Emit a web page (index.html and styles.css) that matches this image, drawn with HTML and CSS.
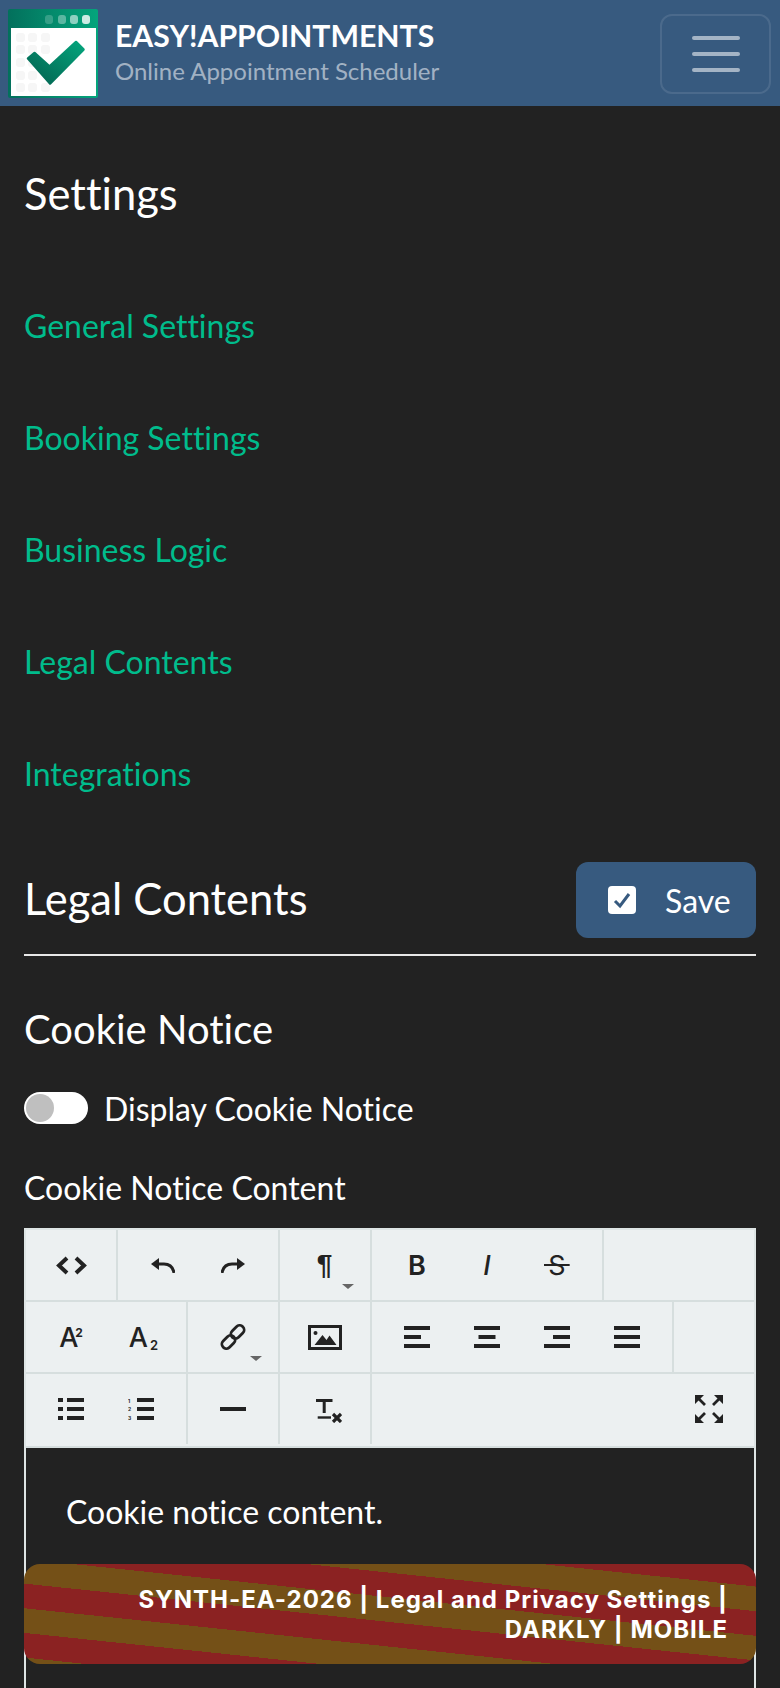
FILE: index.html
```html
<!DOCTYPE html>
<html lang="en">
<head>
    <meta charset="UTF-8">
    <meta name="viewport" content="width=device-width, initial-scale=1.0">
    <title>Easy!Appointments - Legal Contents</title>
    <link rel="stylesheet" href="styles.css">
</head>
<body>
    <header class="navbar">
        <svg class="logo" viewBox="0 0 90 89" width="90" height="89" aria-hidden="true">
            <defs>
                <linearGradient id="logoTop" x1="0" y1="0" x2="1" y2="0">
                    <stop offset="0" stop-color="#03705c"/>
                    <stop offset="1" stop-color="#04a57c"/>
                </linearGradient>
                <linearGradient id="logoCheck" x1="0" y1="1" x2="1" y2="0">
                    <stop offset="0" stop-color="#03604f"/>
                    <stop offset="1" stop-color="#04a57c"/>
                </linearGradient>
            </defs>
            <rect width="90" height="89" rx="2" fill="url(#logoTop)"/>
            <rect x="3" y="19" width="85" height="68" fill="#fff"/>
            <rect x="37" y="6" width="8" height="9" rx="3" fill="#fff" opacity=".2"/>
            <rect x="50" y="6" width="8" height="9" rx="3" fill="#fff" opacity=".35"/>
            <rect x="62" y="6" width="8" height="9" rx="3" fill="#fff" opacity=".55"/>
            <rect x="74" y="6" width="8" height="9" rx="3" fill="#fff" opacity=".8"/>
            <g fill="#f6f6f6">
                <rect x="8" y="24" width="9" height="9" rx="3"/><rect x="20" y="24" width="9" height="9" rx="3"/><rect x="33" y="24" width="9" height="9" rx="3"/>
                <rect x="8" y="36" width="9" height="9" rx="3"/><rect x="20" y="36" width="9" height="9" rx="3"/><rect x="33" y="36" width="9" height="9" rx="3"/>
                <rect x="8" y="49" width="9" height="9" rx="3"/><rect x="20" y="49" width="9" height="9" rx="3"/>
                <rect x="8" y="62" width="9" height="9" rx="3"/><rect x="20" y="62" width="9" height="9" rx="3"/>
                <rect x="8" y="74" width="9" height="9" rx="3"/><rect x="20" y="74" width="9" height="9" rx="3"/><rect x="33" y="74" width="9" height="9" rx="3"/>
            </g>
            <path d="M20 49.5 L26.5 44 L41.5 57.5 L68 33 L75.5 40.5 L42 74.5 Z" fill="url(#logoCheck)" stroke="url(#logoCheck)" stroke-width="2.5" stroke-linejoin="round"/>
        </svg>
        <div class="brand">
            <div class="brand-title">EASY!APPOINTMENTS</div>
            <div class="brand-sub">Online Appointment Scheduler</div>
        </div>
        <button class="toggler" aria-label="Menu">
            <span class="toggler-bar"></span>
            <span class="toggler-bar"></span>
            <span class="toggler-bar"></span>
        </button>
    </header>

    <main class="page">
        <h1 class="side-title">Settings</h1>
        <nav class="side-nav">
            <a href="#">General Settings</a>
            <a href="#">Booking Settings</a>
            <a href="#">Business Logic</a>
            <a href="#">Legal Contents</a>
            <a href="#">Integrations</a>
        </nav>

        <div class="section-head">
            <h2 class="section-title">Legal Contents</h2>
            <button class="save-btn">
                <svg viewBox="0 0 28 28" width="28" height="28" aria-hidden="true">
                    <rect width="28" height="28" rx="4" fill="#fff"/>
                    <path d="M7 15 L12 20 L21 8" fill="none" stroke="#375a7f" stroke-width="3"/>
                </svg>
                Save
            </button>
        </div>

        <h3 class="sub-title">Cookie Notice</h3>
        <div class="switch-row">
            <span class="switch"><span class="switch-knob"></span></span>
            <span>Display Cookie Notice</span>
        </div>
        <div class="field-label">Cookie Notice Content</div>

        <div class="editor">
            <div class="toolbar">
                <div class="tool-row">
                    <div class="tool-group">
                        <span class="tool">
                            <svg viewBox="0 0 31 19" width="31" height="19"><path d="M11 2 L3 9.5 L11 17 M20 2 L28 9.5 L20 17" fill="none" stroke="#222" stroke-width="4"/></svg>
                        </span>
                    </div>
                    <div class="tool-group">
                        <span class="tool">
                            <svg viewBox="0 0 24 15" width="24" height="15"><path d="M0 6 L8 0 V12 Z" fill="#222"/><path d="M7 6 H13 C18 6 22 9 23 15" fill="none" stroke="#222" stroke-width="3"/></svg>
                        </span>
                        <span class="tool">
                            <svg viewBox="0 0 24 15" width="24" height="15"><path d="M24 6 L16 0 V12 Z" fill="#222"/><path d="M17 6 H11 C6 6 2 9 1 15" fill="none" stroke="#222" stroke-width="3"/></svg>
                        </span>
                    </div>
                    <div class="tool-group">
                        <span class="tool tool-para">¶<i class="caret"></i></span>
                    </div>
                    <div class="tool-group">
                        <span class="tool tool-bold">B</span>
                        <span class="tool tool-italic">I</span>
                        <span class="tool tool-strike"><span class="strike">S</span></span>
                    </div>
                </div>
                <div class="tool-row">
                    <div class="tool-group">
                        <span class="tool tool-script">A<sup class="sup">2</sup></span>
                        <span class="tool tool-script tool-script-sub">A<sub class="sub">2</sub></span>
                    </div>
                    <div class="tool-group">
                        <span class="tool">
                            <svg viewBox="0 0 26 26" width="26" height="26">
                                <rect x="10" y="3.5" width="15" height="9" rx="4.5" transform="rotate(-45 17.5 8)" fill="none" stroke="#222" stroke-width="2.8"/>
                                <rect x="1" y="13.5" width="15" height="9" rx="4.5" transform="rotate(-45 8.5 18)" fill="none" stroke="#222" stroke-width="2.8"/>
                            </svg>
                            <i class="caret"></i>
                        </span>
                    </div>
                    <div class="tool-group">
                        <span class="tool">
                            <svg viewBox="0 0 34 25" width="34" height="25">
                                <rect x="1.5" y="1.5" width="31" height="22" fill="none" stroke="#222" stroke-width="3"/>
                                <circle cx="7.5" cy="8" r="2" fill="#222"/>
                                <path d="M6.5 20 L14.5 10 L18.5 15 L21.5 10.5 L28.5 20 Z" fill="#222"/>
                            </svg>
                        </span>
                    </div>
                    <div class="tool-group">
                        <span class="tool">
                            <svg viewBox="0 0 26 22" width="26" height="22" fill="#222"><rect y="0" width="26" height="4"/><rect y="9" width="17" height="4"/><rect y="18" width="26" height="4"/></svg>
                        </span>
                        <span class="tool">
                            <svg viewBox="0 0 26 22" width="26" height="22" fill="#222"><rect y="0" width="26" height="4"/><rect x="4.5" y="9" width="17" height="4"/><rect y="18" width="26" height="4"/></svg>
                        </span>
                        <span class="tool">
                            <svg viewBox="0 0 26 22" width="26" height="22" fill="#222"><rect y="0" width="26" height="4"/><rect x="9" y="9" width="17" height="4"/><rect y="18" width="26" height="4"/></svg>
                        </span>
                        <span class="tool">
                            <svg viewBox="0 0 26 22" width="26" height="22" fill="#222"><rect y="0" width="26" height="4"/><rect y="9" width="26" height="4"/><rect y="18" width="26" height="4"/></svg>
                        </span>
                    </div>
                </div>
                <div class="tool-row">
                    <div class="tool-group">
                        <span class="tool">
                            <svg viewBox="0 0 26 22" width="26" height="22" fill="#222">
                                <rect y="0" width="5" height="4"/><rect y="9" width="5" height="4"/><rect y="18" width="5" height="4"/>
                                <rect x="9" y="0" width="17" height="4"/><rect x="9" y="9" width="17" height="4"/><rect x="9" y="18" width="17" height="4"/>
                            </svg>
                        </span>
                        <span class="tool">
                            <svg viewBox="0 0 26 22" width="26" height="22" fill="#222">
                                <text class="list-num" x="0" y="4.5">1</text><text class="list-num" x="0" y="13">2</text><text class="list-num" x="0" y="21.5">3</text>
                                <rect x="9" y="0" width="17" height="4"/><rect x="9" y="9" width="17" height="4"/><rect x="9" y="18" width="17" height="4"/>
                            </svg>
                        </span>
                    </div>
                    <div class="tool-group">
                        <span class="tool"><span class="tool-hr"></span></span>
                    </div>
                    <div class="tool-group">
                        <span class="tool">
                            <svg class="clear-icon" viewBox="0 0 26 24" width="26" height="24" fill="none" stroke="#222">
                                <path d="M0 1.5 H16.5 M8.2 1.5 V14" stroke-width="3"/>
                                <path d="M1.7 18.5 H15" stroke-width="2.4"/>
                                <path d="M17 15 L25 23 M25 15 L17 23" stroke-width="3.2"/>
                            </svg>
                        </span>
                    </div>
                    <div class="tool-group tool-group-end">
                        <span class="tool">
                            <svg viewBox="0 0 28 28" width="28" height="28" fill="#222" stroke="#222">
                                <path d="M0 0 H9 L0 9 Z M28 0 V9 L19 0 Z M0 28 V19 L9 28 Z M28 28 H19 L28 19 Z" stroke="none"/>
                                <path d="M3 3 L10 10 M25 3 L18 10 M3 25 L10 18 M25 25 L18 18" stroke-width="2.8"/>
                            </svg>
                        </span>
                    </div>
                </div>
            </div>
            <div class="editor-body">Cookie notice content.</div>
        </div>
    </main>

    <div class="stamp">SYNTH-EA-2026 | Legal and Privacy Settings | DARKLY | MOBILE</div>
</body>
</html>
```

FILE: styles.css
```css
html, body {
    height: 1688px;
    overflow: hidden;
}
body {
    position: relative;
    margin: 0;
    background-color: #222;
    color: #fff;
    font-family: 'Lato', 'Noto Sans', sans-serif;
    font-size: 32px;
    font-variant-ligatures: none;
}
.navbar {
    display: flex;
    align-items: center;
    height: 106px;
    padding: 0 9px 0 8px;
    box-sizing: border-box;
    background-color: #375a7f;
}
.logo {
    flex: none;
    margin-right: 17px;
}
.brand {
    flex: 1;
}
.brand-title {
    font-size: 30.2px;
    font-weight: 700;
    line-height: 36px;
}
.brand-sub {
    font-size: 24px;
    line-height: 36px;
    color: rgba(255, 255, 255, 0.55);
}
.toggler {
    display: flex;
    flex-direction: column;
    align-items: center;
    justify-content: center;
    gap: 12px;
    align-self: flex-start;
    width: 111px;
    height: 80px;
    margin-top: 14px;
    padding: 0;
    background: none;
    border: 2px solid rgba(255, 255, 255, 0.1);
    border-radius: 12px;
}
.toggler-bar {
    width: 48px;
    height: 4px;
    border-radius: 2px;
    background-color: rgba(255, 255, 255, 0.55);
}
.page {
    padding: 0 24px;
}
.side-title {
    margin: 63px 0 53px;
    font-size: 43.5px;
    font-weight: 400;
    line-height: 48px;
}
.side-nav a {
    display: block;
    height: 112px;
    line-height: 112px;
    color: #00bc8c;
    text-decoration: none;
}
.section-head {
    display: flex;
    align-items: center;
    justify-content: space-between;
    margin-top: 32px;
    padding-bottom: 16px;
    border-bottom: 2px solid #e8e8e8;
}
.section-title {
    margin: 0 0 4px;
    font-size: 43.5px;
    font-weight: 400;
}
.save-btn {
    display: flex;
    align-items: center;
    gap: 29px;
    width: 180px;
    height: 76px;
    padding: 0 0 0 32px;
    border: none;
    border-radius: 12px;
    background-color: #375a7f;
    color: #fff;
    font-family: inherit;
    font-size: 32px;
    font-variant-ligatures: none;
}
.sub-title {
    margin: 49px 0 0;
    font-size: 40px;
    font-weight: 400;
    line-height: 48px;
}
.switch-row {
    display: flex;
    align-items: center;
    gap: 16px;
    height: 32px;
    margin-top: 39px;
}
.switch {
    display: block;
    width: 64px;
    height: 32px;
    padding: 2px;
    box-sizing: border-box;
    border-radius: 16px;
    background-color: #fff;
}
.switch-knob {
    display: block;
    width: 28px;
    height: 28px;
    border-radius: 50%;
    background-color: #bfbfbf;
}
.field-label {
    margin-top: 44px;
    margin-bottom: 20px;
    line-height: 40px;
}
.editor {
    border: 2px solid #dee5e5;
    border-bottom: none;
}
.toolbar {
    padding-bottom: 2px;
    border-bottom: 2px solid #d6dede;
    background-color: #ecf0f1;
}
.tool-row {
    display: flex;
    height: 70px;
}
.tool-row + .tool-row {
    box-sizing: content-box;
    border-top: 2px solid #d6dede;
}
.tool-group {
    display: flex;
    padding: 0 10px;
    border-right: 2px solid #d6dede;
}
.tool-group-end {
    margin-left: auto;
    border-right: none;
}
.tool {
    position: relative;
    display: flex;
    align-items: center;
    justify-content: center;
    width: 70px;
    color: #222;
    font-family: 'Inter', 'Liberation Sans', sans-serif;
}
.caret {
    position: absolute;
    top: 54px;
    left: 52px;
    width: 0;
    height: 0;
    border-top: 5px solid #666;
    border-left: 6px solid transparent;
    border-right: 6px solid transparent;
}
.tool-para {
    padding-right: 1px;
    box-sizing: border-box;
    font-family: 'Liberation Sans', sans-serif;
    font-size: 28px;
    font-weight: 700;
}
.tool-bold {
    font-size: 27px;
    font-weight: 600;
}
.tool-italic {
    font-size: 27px;
    font-weight: 500;
    font-style: italic;
}
.tool-strike {
    font-size: 27px;
    font-weight: 400;
}
.strike {
    padding: 0 4px;
    background: linear-gradient(#222, #222) center / 100% 2px no-repeat;
}
.tool-script {
    font-size: 27px;
    font-weight: 500;
    line-height: 1;
}
.tool-script-sub {
    padding-left: 5px;
    box-sizing: border-box;
}
.sup {
    align-self: flex-start;
    margin-top: 25px;
    margin-left: -3px;
    font-size: 12px;
    font-weight: 700;
    line-height: 1;
}
.sub {
    align-self: flex-end;
    margin-bottom: 20px;
    margin-left: 2px;
    font-size: 13px;
    font-weight: 600;
    line-height: 1;
}
.list-num {
    font-family: 'Inter', sans-serif;
    font-size: 5px;
    font-weight: 700;
}
.tool-hr {
    width: 26px;
    height: 4px;
    background-color: #222;
}
.clear-icon {
    margin: 3px 0 0 8px;
}
.editor-body {
    height: 196px;
    padding: 44px 40px 0;
    line-height: 40px;
}
.stamp {
    position: absolute;
    top: 1564px;
    left: 24px;
    width: 732px;
    height: 100px;
    padding: 21px 28px 0;
    box-sizing: border-box;
    border-radius: 16px;
    background: repeating-linear-gradient(6deg, #745017 0 6.5px, #8b2222 6.5px 31px, #745017 31px 49px);
    font-family: 'Inter', sans-serif;
    font-size: 24px;
    font-weight: 700;
    letter-spacing: 1px;
    line-height: 30px;
    text-align: right;
}
```
